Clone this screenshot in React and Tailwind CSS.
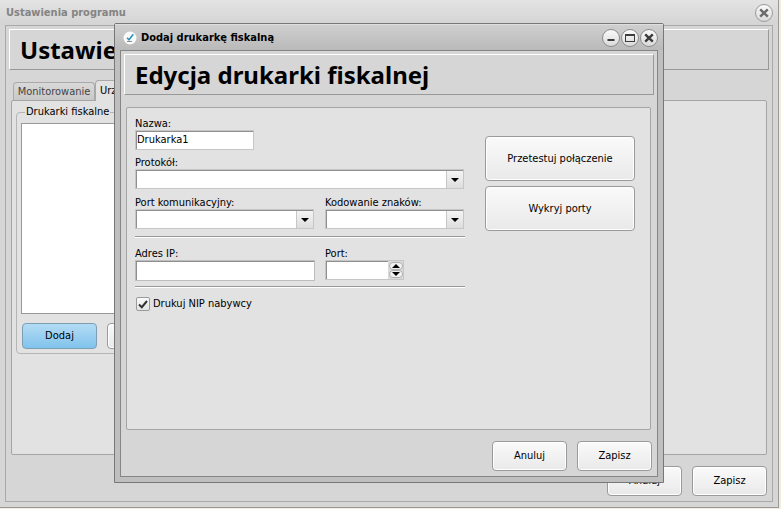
import React, { useState } from 'react';
import clsx from 'clsx';

function RoundButton({ label, muted, children }) {
  return (
    <button
      type="button"
      aria-label={label}
      className={clsx(
        'flex size-[18px] items-center justify-center rounded-full border bg-linear-to-b from-[#fafafa] to-[#dadada]',
        muted ? 'border-[#9a9a9a] text-[#6a6a6a]' : 'border-[#8c8c8c] text-[#3c3c3c]'
      )}
    >
      {children}
    </button>
  );
}

function CloseIcon() {
  return (
    <svg width="10" height="10" viewBox="0 0 10 10" fill="none" stroke="currentColor" strokeWidth="2.4">
      <path d="M1.2 1.4 8.8 8.6M8.8 1.4 1.2 8.6" />
    </svg>
  );
}

function Button({ className, children }) {
  return (
    <button
      type="button"
      className={clsx(
        'rounded-[4px] border border-[#9a9a9a] bg-linear-to-b from-[#fafafa] to-[#e9e9e9] inset-shadow-[0_0_0_1px_#ffffff]',
        className
      )}
    >
      {children}
    </button>
  );
}

function Heading({ level: Level, children }) {
  return (
    <Level className="h-[41px] overflow-hidden border border-t-white border-r-[#999] border-b-[#999] border-l-white pl-2.5 font-['Noto_Sans',sans-serif] text-2xl leading-10 font-bold whitespace-nowrap">
      {children}
    </Level>
  );
}

function Label({ htmlFor, children }) {
  return (
    <label htmlFor={htmlFor} className="block h-[13px] leading-[14px]">
      {children}
    </label>
  );
}

function Select({ id, label, className }) {
  return (
    <div className={className}>
      <Label htmlFor={id}>{label}</Label>
      <div className="grid border border-[#c6c6c6]">
        <select
          id={id}
          className="col-start-1 row-start-1 h-[18px] w-full appearance-none border-t border-l border-[#8f8f8f] bg-white px-1 outline-none"
        />
        <span className="pointer-events-none col-start-1 row-start-1 mt-px flex w-[17px] items-center justify-center justify-self-end border-l border-[#c6c6c6] bg-linear-to-b from-[#f4f4f4] to-[#dedede]">
          <svg width="8" height="4" viewBox="0 0 8 4"><path d="M0 0h8L4 4z" /></svg>
        </span>
      </div>
    </div>
  );
}

function Separator() {
  return <hr className="h-[2px] border-t border-b border-t-[#999] border-b-white" />;
}

function SettingsWindow() {
  return (
    <div className="flex flex-1 flex-col border-r border-b border-[#999] bg-[#d6d6d6] pr-[5px] pb-[5px] pl-[5px]">
      <div className="-mx-[5px] flex h-[25px] items-center justify-between bg-linear-to-b from-[#e3e3e3] to-[#d4d4d4] pr-[5px] pl-1.5">
        <span className="font-bold text-[#848484]">Ustawienia programu</span>
        <RoundButton label="Zamknij ustawienia" muted><CloseIcon /></RoundButton>
      </div>
      <div className="flex flex-1 flex-col border border-[#a9a9a9] px-[3px] pt-[3px] pb-[5px]">
        <Heading level="h1">Ustawienia programu</Heading>
        <div className="mt-2.5 ml-1 flex h-5 items-end">
          <button type="button" className="h-[18px] w-[82px] rounded-t-[4px] border border-b-0 border-[#a9a9a9] bg-linear-to-b from-[#d9d9d9] to-[#c9c9c9] text-[#444]">
            Monitorowanie
          </button>
          <button type="button" className="z-10 -mb-px h-[21px] rounded-t-[4px] border border-b-0 border-[#a9a9a9] bg-[#e2e2e2] px-1">
            Urządzenia
          </button>
        </div>
        <div className="mr-[2px] ml-[2px] flex-1 rounded-[2px] border border-[#a5a5a5] bg-[#e2e2e2] p-1">
          <fieldset className="h-[249px] w-[300px] rounded-[4px] border border-[#b5b5b5] px-1">
            <legend className="ml-1 h-[14px] px-px leading-[14px]">Drukarki fiskalne</legend>
            <div className="mt-1 h-[191px] border border-[#999] bg-white" />
            <div className="mt-[9px] ml-px flex gap-2.5">
              <button type="button" className="h-[26px] w-[75px] rounded-[4px] border border-[#7d9fb3] bg-linear-to-b from-[#b3dcf4] to-[#80c3ec]">
                Dodaj
              </button>
              <Button className="h-[26px] w-[75px]">Edytuj</Button>
            </div>
          </fieldset>
        </div>
        <div className="mt-[11px] mr-[2px] flex justify-end gap-2.5">
          <Button className="h-[30px] w-[75px]">Anuluj</Button>
          <Button className="h-[30px] w-[75px]">Zapisz</Button>
        </div>
      </div>
    </div>
  );
}

function PrinterDialog() {
  const [name, setName] = useState('Drukarka1');
  const [printNip, setPrintNip] = useState(true);

  return (
    <div role="dialog" aria-label="Dodaj drukarkę fiskalną" className="absolute top-[23px] right-[117px] left-[114px] z-20 rounded-t-[2px] border border-[#777] bg-[#bfbfbf] px-[5px] pb-[5px]">
      <div className="-mx-[5px] flex h-[26px] items-center border-t border-[#dedede] bg-linear-to-b from-[#cfcfcf] to-[#b9b9b9] pr-[5px] pl-2">
        <svg width="14" height="14" viewBox="0 0 14 14" fill="none">
          <circle cx="7" cy="7" r="6.5" fill="#fafafa" />
          <path d="M4 6.8 6 8.8 10.3 3.2" stroke="#2793b5" strokeWidth="1.5" />
          <path d="M4 10.5h5" stroke="#8a8a8a" strokeWidth="1" />
        </svg>
        <span className="ml-1 flex-1 font-bold">Dodaj drukarkę fiskalną</span>
        <div className="flex gap-px">
          <RoundButton label="Minimalizuj">
            <svg width="10" height="10" viewBox="0 0 10 10"><path d="M1.5 6h7v2h-7z" fill="currentColor" /></svg>
          </RoundButton>
          <RoundButton label="Maksymalizuj">
            <svg width="10" height="8" viewBox="0 0 10 8"><path fillRule="evenodd" d="M0 0h10v8H0zM1 2v5h8V2z" fill="currentColor" /></svg>
          </RoundButton>
          <RoundButton label="Zamknij"><CloseIcon /></RoundButton>
        </div>
      </div>
      <form onSubmit={(e) => e.preventDefault()} className="border border-[#868686] bg-[#d6d6d6] px-[3px] pt-[3px] pb-[5px]">
        <Heading level="h2">Edycja drukarki fiskalnej</Heading>
        <div className="mt-3 mr-[3px] ml-[2px] flex min-h-[323px] items-start justify-between rounded-[2px] border border-[#a5a5a5] bg-[#e2e2e2] pt-[9px] pr-[15px] pl-2">
          <div className="flex w-[330px] flex-col">
            <Label htmlFor="name">Nazwa:</Label>
            <input
              id="name"
              value={name}
              onChange={(e) => setName(e.target.value)}
              className="h-5 w-[119px] border border-[#c6c6c6] bg-white pb-px pl-px outline-none inset-shadow-[1px_1px_0_#8f8f8f]"
            />
            <Select id="protocol" label="Protokół:" className="mt-[6px] mr-px" />
            <div className="mt-[7px] mr-px flex gap-[11px]">
              <Select id="comPort" label="Port komunikacyjny:" className="w-[179px]" />
              <Select id="encoding" label="Kodowanie znaków:" className="flex-1" />
            </div>
            <div className="mt-[7px]"><Separator /></div>
            <div className="mt-[9px] flex gap-2.5">
              <div className="w-[180px]">
                <Label htmlFor="ip">Adres IP:</Label>
                <input id="ip" className="h-[21px] w-full border border-[#bdbdbd] bg-white px-1 outline-none inset-shadow-[1px_1px_0_#8f8f8f]" />
              </div>
              <div>
                <Label htmlFor="port">Port:</Label>
                <div className="flex h-5 w-[79px] border border-[#c6c6c6] bg-[#dadada]">
                  <input id="port" inputMode="numeric" className="w-[62px] border-t border-l border-[#8f8f8f] bg-white px-1 outline-none" />
                  <div className="flex flex-1 flex-col items-center justify-center">
                    <button type="button" aria-label="Zwiększ port" className="flex h-2 w-[14px] items-center justify-center rounded-full border border-[#b0b0b0] bg-[#f2f2f2]">
                      <svg width="8" height="4" viewBox="0 0 8 4"><path d="M0 4h8L4 0z" /></svg>
                    </button>
                    <button type="button" aria-label="Zmniejsz port" className="flex h-2 w-[14px] items-center justify-center rounded-full border border-[#b0b0b0] bg-[#f2f2f2]">
                      <svg width="8" height="4" viewBox="0 0 8 4"><path d="M0 0h8L4 4z" /></svg>
                    </button>
                  </div>
                </div>
              </div>
            </div>
            <div className="mt-[5px]"><Separator /></div>
            <label className="mt-[9px] ml-px flex items-center gap-[3px]">
              <span className="grid size-[14px] place-items-center">
                <input
                  type="checkbox"
                  checked={printNip}
                  onChange={(e) => setPrintNip(e.target.checked)}
                  className="col-start-1 row-start-1 size-[14px] appearance-none rounded-[2px] border border-[#9a9a9a] bg-linear-to-b from-[#fafafa] to-[#e4e4e4]"
                />
                {printNip && (
                  <svg width="10" height="9" viewBox="0 0 10 9" fill="none" className="pointer-events-none col-start-1 row-start-1">
                    <path d="M1 4.5 3.8 7.2 9 1" stroke="#333" strokeWidth="2" />
                  </svg>
                )}
              </span>
              Drukuj NIP nabywcy
            </label>
          </div>
          <div className="mt-[19px] flex flex-col gap-[5px]">
            <Button className="h-[45px] w-[150px]">Przetestuj połączenie</Button>
            <Button className="h-[45px] w-[150px]">Wykryj porty</Button>
          </div>
        </div>
        <div className="mt-[11px] mr-[2px] flex justify-end gap-2.5">
          <Button className="h-[30px] w-[75px]">Anuluj</Button>
          <Button className="h-[30px] w-[75px]">Zapisz</Button>
        </div>
      </form>
    </div>
  );
}

function App() {
  return (
    <div className="relative flex min-h-screen flex-col bg-[#f3ecdd] pr-[2px] pb-px font-['DejaVu_Sans_Condensed','DejaVu_Sans',sans-serif] text-[11px] leading-[14px] text-black">
      <SettingsWindow />
      <PrinterDialog />
    </div>
  );
}

export default App;
